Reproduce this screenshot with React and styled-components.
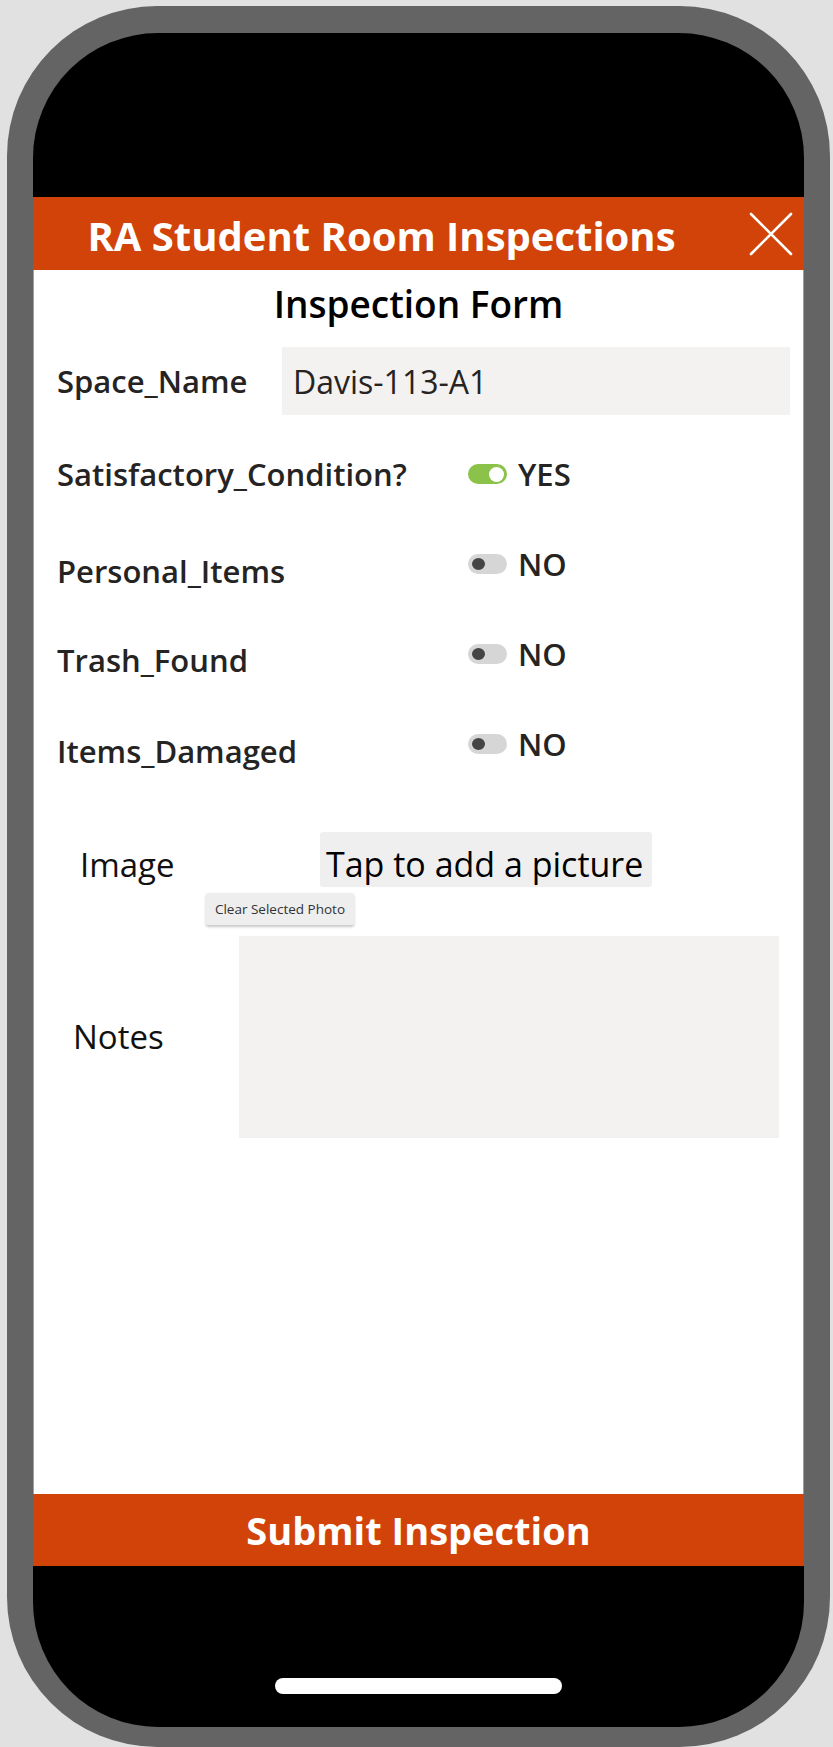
import React from 'react'
import styled, { createGlobalStyle } from 'styled-components'

const GlobalStyle = createGlobalStyle`
  html, body {
    margin: 0;
    padding: 0;
    overflow: hidden;
    background: #e1e1e1;
  }
  body {
    font-family: "Open Sans", "Noto Sans", sans-serif;
  }
`

const Page = styled.div`
  padding: 6px 3px 0 7px;
`

const Phone = styled.div`
  box-sizing: border-box;
  width: 823px;
  height: 1741px;
  padding: 27px 26px 20px 26px;
  background: #646464;
  border-radius: 150px;
`

const Screen = styled.div`
  display: flex;
  flex-direction: column;
  height: 100%;
  background: #000;
  border-radius: 125px;
  overflow: hidden;
`

const TopBezel = styled.div`
  height: 164px;
  flex: none;
`

const Header = styled.header`
  display: flex;
  align-items: center;
  height: 73px;
  flex: none;
  background: #d24309;
`

const Title = styled.h1`
  flex: 1;
  margin: 0;
  text-align: center;
  color: #fff;
  font-size: 40px;
  font-weight: 700;
  line-height: 1;
  padding-top: 4px;
`

const CloseButton = styled.button`
  display: flex;
  align-items: center;
  justify-content: center;
  box-sizing: border-box;
  width: 74px;
  height: 73px;
  padding: 0 0 0 7px;
  border: 0;
  background: transparent;
  cursor: pointer;
`

const Body = styled.main`
  flex: 1;
  display: flex;
  flex-direction: column;
  background: #fff;
  border-left: 1px solid #e8885a;
  border-right: 1px solid #e8885a;
`

const FormTitle = styled.h2`
  margin: 16px 0 0;
  text-align: center;
  color: #000;
  font-size: 37px;
  font-weight: 600;
  line-height: 36px;
`

const FieldRow = styled.div`
  display: grid;
  grid-template-columns: ${p => p.$cols};
  align-items: ${p => p.$align || 'center'};
  margin-top: ${p => p.$top}px;
  padding-left: ${p => p.$indent}px;
  height: ${p => p.$height}px;
`

const Label = styled.span`
  color: ${p => (p.$plain ? '#111' : '#252423')};
  font-size: ${p => (p.$plain ? 33 : 31)}px;
  font-weight: ${p => (p.$plain ? 400 : 600)};
  line-height: 40px;
  white-space: nowrap;
`

const TextInput = styled.div`
  box-sizing: border-box;
  height: 68px;
  margin-right: 13px;
  padding: 0 11px;
  display: flex;
  align-items: center;
  background: #f3f2f1;
  color: #252423;
  font-size: 32px;
  font-weight: 400;
`

const ToggleGroup = styled.div`
  display: flex;
  align-items: center;
  gap: 11px;
  transform: translateY(-${p => p.$lift}px);
`

const Track = styled.span`
  position: relative;
  display: inline-block;
  width: 39px;
  height: 20px;
  border-radius: 10px;
  background: ${p => (p.$on ? '#8bc34a' : '#d6d6d6')};
`

const Knob = styled.span`
  position: absolute;
  top: ${p => (p.$on ? 3 : 4)}px;
  left: ${p => (p.$on ? 21 : 4)}px;
  width: ${p => (p.$on ? 15 : 13)}px;
  height: ${p => (p.$on ? 15 : 12)}px;
  border-radius: 50%;
  background: ${p => (p.$on ? '#fff' : '#454545')};
`

const ToggleText = styled.span`
  color: #252423;
  font-size: 31px;
  font-weight: 600;
  line-height: 40px;
`

const PictureButton = styled.button`
  box-sizing: border-box;
  width: 332px;
  height: 55px;
  padding: 9px 0 0 6px;
  border: 0;
  border-radius: 3px;
  background: #efefef;
  color: #000;
  font-family: inherit;
  font-size: 34px;
  font-weight: 400;
  line-height: 36px;
  text-align: left;
  white-space: nowrap;
`

const ClearButton = styled.button`
  box-sizing: border-box;
  width: 148px;
  height: 32px;
  margin: 6px 0 0 172px;
  padding: 0;
  border: 0;
  border-radius: 2px;
  background: #eeeeee;
  box-shadow: 0 2px 3px rgba(0, 0, 0, 0.22);
  color: #323232;
  font-family: inherit;
  font-size: 13.5px;
  font-weight: 500;
`

const NotesBox = styled.div`
  width: 540px;
  height: 202px;
  background: #f3f2f1;
`

const SubmitBar = styled.button`
  flex: none;
  height: 72px;
  border: 0;
  background: #d24309;
  color: #fff;
  font-family: inherit;
  font-size: 38px;
  font-weight: 700;
  padding: 0;
`

const BottomBezel = styled.div`
  flex: none;
  height: 161px;
  display: flex;
  justify-content: center;
  padding-top: 112px;
  box-sizing: border-box;
`

const HomeIndicator = styled.span`
  width: 287px;
  height: 16px;
  border-radius: 8px;
  background: #fff;
`

const checks = [
  { label: 'Satisfactory_Condition?', on: true, top: 39, lift: 0 },
  { label: 'Personal_Items', on: false, top: 57, lift: 7 },
  { label: 'Trash_Found', on: false, top: 49, lift: 6 },
  { label: 'Items_Damaged', on: false, top: 51, lift: 7 },
]

function Toggle({ on }) {
  return (
    <Track $on={on}>
      <Knob $on={on} />
    </Track>
  )
}

export default function App() {
  return (
    <>
      <GlobalStyle />
      <Page>
        <Phone>
          <Screen>
            <TopBezel />
            <Header>
              <Title>RA Student Room Inspections</Title>
              <CloseButton aria-label="Close">
                <svg width="44" height="44" viewBox="0 0 44 44">
                  <path d="M2 2 L42 42 M42 2 L2 42" stroke="#fff" strokeWidth="2.6" strokeLinecap="round" />
                </svg>
              </CloseButton>
            </Header>
            <Body>
              <FormTitle>Inspection Form</FormTitle>
              <FieldRow $cols="225px 1fr" $top={25} $indent={23} $height={68}>
                <Label>Space_Name</Label>
                <TextInput>Davis-113-A1</TextInput>
              </FieldRow>
              {checks.map(item => (
                <FieldRow key={item.label} $cols="411px auto" $top={item.top} $indent={23} $height={40}>
                  <Label>{item.label}</Label>
                  <ToggleGroup $lift={item.lift}>
                    <Toggle on={item.on} />
                    <ToggleText>{item.on ? 'YES' : 'NO'}</ToggleText>
                  </ToggleGroup>
                </FieldRow>
              ))}
              <FieldRow $cols="240px auto" $align="baseline" $top={61} $indent={46} $height={55}>
                <Label $plain>Image</Label>
                <PictureButton>Tap to add a picture</PictureButton>
              </FieldRow>
              <ClearButton>Clear Selected Photo</ClearButton>
              <FieldRow $cols="166px 540px" $top={11} $indent={39} $height={202}>
                <Label $plain>Notes</Label>
                <NotesBox />
              </FieldRow>
            </Body>
            <SubmitBar>Submit Inspection</SubmitBar>
            <BottomBezel>
              <HomeIndicator />
            </BottomBezel>
          </Screen>
        </Phone>
      </Page>
    </>
  )
}
